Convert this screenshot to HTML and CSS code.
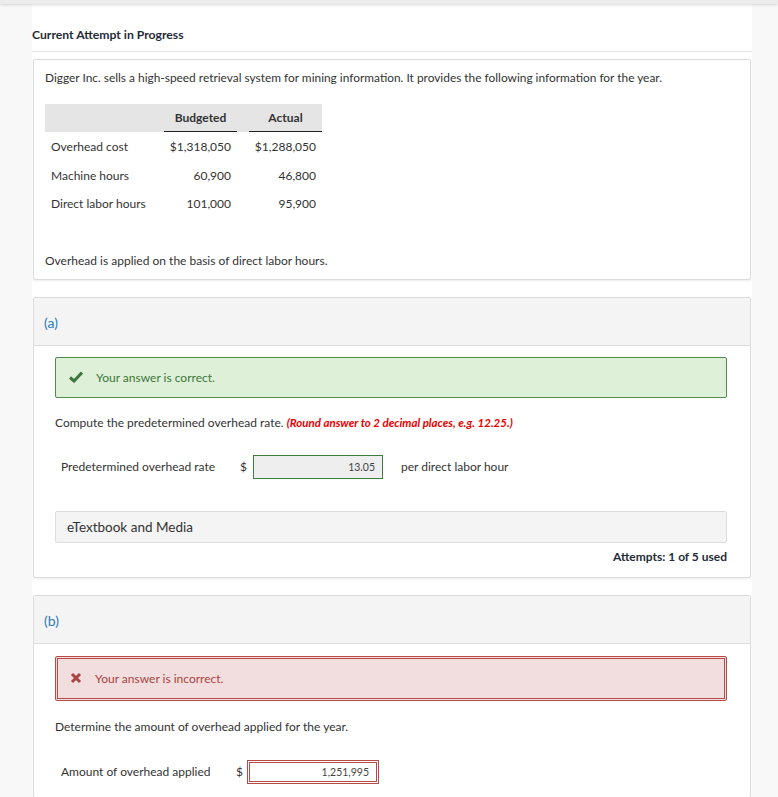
FILE: index.html
```html
<!DOCTYPE html>
<html>
<head>
<meta charset="utf-8">
<link rel="stylesheet" href="styles.css">
</head>
<body>
<div class="topbar"></div>
<main class="page">
  <div class="attempt-head">Current Attempt in Progress</div>

  <section class="card question">
    <p class="intro">Digger Inc. sells a high-speed retrieval system for mining information. It provides the following information for the year.</p>
    <div class="data-table">
      <div class="thead">
        <div class="th"></div>
        <div class="th"><span>Budgeted</span></div>
        <div class="th"><span>Actual</span></div>
      </div>
      <div class="tr"><div class="td label">Overhead cost</div><div class="td num">$1,318,050</div><div class="td num">$1,288,050</div></div>
      <div class="tr"><div class="td label">Machine hours</div><div class="td num">60,900</div><div class="td num">46,800</div></div>
      <div class="tr"><div class="td label">Direct labor hours</div><div class="td num">101,000</div><div class="td num">95,900</div></div>
    </div>
    <p class="note">Overhead is applied on the basis of direct labor hours.</p>
  </section>

  <section class="card part">
    <div class="part-head">(a)</div>
    <div class="part-body">
      <div class="alert alert-ok">
        <svg class="alert-icon" width="14" height="12" viewBox="0 0 14 12"><path d="M1 6.5 L5 10 L13 1.5" fill="none" stroke="#3c763d" stroke-width="3"/></svg>
        <span>Your answer is correct.</span>
      </div>
      <p class="prompt">Compute the predetermined overhead rate. <em class="hint">(Round answer to 2 decimal places, e.g. 12.25.)</em></p>
      <div class="answer-row">
        <span class="answer-label">Predetermined overhead rate</span>
        <span class="currency">$</span>
        <span class="input input-ok">13.05</span>
        <span class="unit">per direct labor hour</span>
      </div>
      <div class="etext">eTextbook and Media</div>
      <div class="attempts">Attempts: 1 of 5 used</div>
    </div>
  </section>

  <section class="card part">
    <div class="part-head">(b)</div>
    <div class="part-body">
      <div class="alert alert-bad">
        <svg class="alert-icon" width="12" height="12" viewBox="0 0 12 12"><path d="M2 2 L10 10 M10 2 L2 10" fill="none" stroke="#a94442" stroke-width="3"/></svg>
        <span>Your answer is incorrect.</span>
      </div>
      <p class="prompt prompt-b">Determine the amount of overhead applied for the year.</p>
      <div class="answer-row row-b">
        <span class="answer-label">Amount of overhead applied</span>
        <span class="currency">$</span>
        <span class="input input-bad">1,251,995</span>
      </div>
    </div>
  </section>
</main>
</body>
</html>
```

FILE: styles.css
```css
html, body {
  margin: 0;
  padding: 0;
}
body {
  background: #f8f8f8;
  font-family: Lato, "Liberation Sans", sans-serif;
  color: #333;
  font-size: 12px;
}
.topbar {
  height: 4px;
  background: #ececec;
  box-shadow: 0 1px 3px rgba(0,0,0,0.15);
  position: relative;
  z-index: 2;
}
.page {
  margin-left: 32px;
  width: 720px;
  background: #fff;
  min-height: 800px;
  overflow: hidden;
}
.attempt-head {
  font-weight: 700;
  color: #1f2b38;
  font-size: 12.2px;
  padding: 23px 0 0 0;
  height: 24px;
  border-bottom: 1px solid #e6e6e6;
  margin-bottom: 7px;
}
.card {
  margin: 0 1px 17px 1px;
  border: 1px solid #dcdcdc;
  border-radius: 2px;
  box-shadow: 0 1px 2px rgba(0,0,0,0.08);
  background: #fff;
}
.question {
  padding: 10px 11px 10px 11px;
}
.intro {
  margin: 0;
  font-size: 11.9px;
  line-height: 16px;
  color: #333;
}
.data-table {
  margin-top: 18px;
  width: 277px;
  font-size: 12px;
}
.thead, .tr {
  display: grid;
  grid-template-columns: 119px 73px 85px;
}
.thead {
  background: #e5e5e5;
  height: 28px;
}
.th {
  font-weight: 700;
  text-align: center;
  color: #333;
}
.th span {
  display: block;
  height: 27px;
  line-height: 27px;
}
.th:not(:first-child) span {
  border-bottom: 1px solid #222;
}
.th:last-child span {
  margin-left: 12px;
}
.tr {
  height: 28.5px;
  line-height: 30.5px;
}
.td.label {
  padding-left: 6px;
}
.td.num {
  text-align: right;
  padding-right: 6px;
}
.note {
  margin: 35px 0 0 0;
  font-size: 12px;
  line-height: 16px;
}
.part-head {
  background: #f4f4f4;
  border-bottom: 1px solid #dcdcdc;
  height: 47px;
  line-height: 49px;
  padding-left: 10px;
  font-size: 14px;
  color: #2b7bb9;
}
.part-body {
  padding: 11px 23px 13px 21px;
}
.alert {
  display: flex;
  align-items: center;
  font-size: 12px;
  border-radius: 2px;
}
.alert-ok {
  height: 39px;
  border: 1px solid #4f8a4f;
  background: #dff0d8;
  color: #3c763d;
  padding-left: 13px;
}
.alert-ok .alert-icon {
  margin-right: 13px;
}
.alert-bad {
  height: 39px;
  border: 3px double #b94a48;
  background: #f2dede;
  color: #a94442;
  padding-left: 12px;
  margin-top: 1px;
}
.alert-bad .alert-icon {
  margin-right: 13px;
}
.prompt {
  margin: 17px 0 0 0;
  font-size: 12px;
  line-height: 16px;
}
.prompt-b {
  margin-top: 18px;
}
.hint {
  color: #e60000;
  font-weight: 700;
  font-style: italic;
  font-size: 11.5px;
}
.answer-row {
  display: flex;
  align-items: center;
  margin-top: 24px;
  font-size: 12px;
}
.answer-label {
  margin-left: 6px;
  width: 179px;
}
.currency {
  width: 13px;
}
.input {
  display: block;
  box-sizing: border-box;
  width: 130px;
  height: 24px;
  line-height: 22px;
  text-align: right;
  padding-right: 7px;
  font-size: 10.5px;
  color: #444;
}
.input-ok {
  background: #eee;
  border: 1px solid #3d7d3d;
}
.input-bad {
  background: #fff;
  border: 3px double #b94a48;
  line-height: 18px;
  width: 132px;
}
.unit {
  margin-left: 18px;
}
.row-b {
  margin-top: 25px;
}
.row-b .answer-label {
  width: 175px;
}
.row-b .currency {
  width: 11px;
}
.etext {
  margin-top: 32px;
  height: 30px;
  line-height: 30px;
  background: #f4f4f4;
  border: 1px solid #dcdcdc;
  border-radius: 2px;
  padding-left: 11px;
  font-size: 13.5px;
  color: #333;
}
.attempts {
  text-align: right;
  font-weight: 700;
  font-size: 12px;
  color: #1f2b38;
  margin-top: 7px;
  line-height: 14px;
}
```
